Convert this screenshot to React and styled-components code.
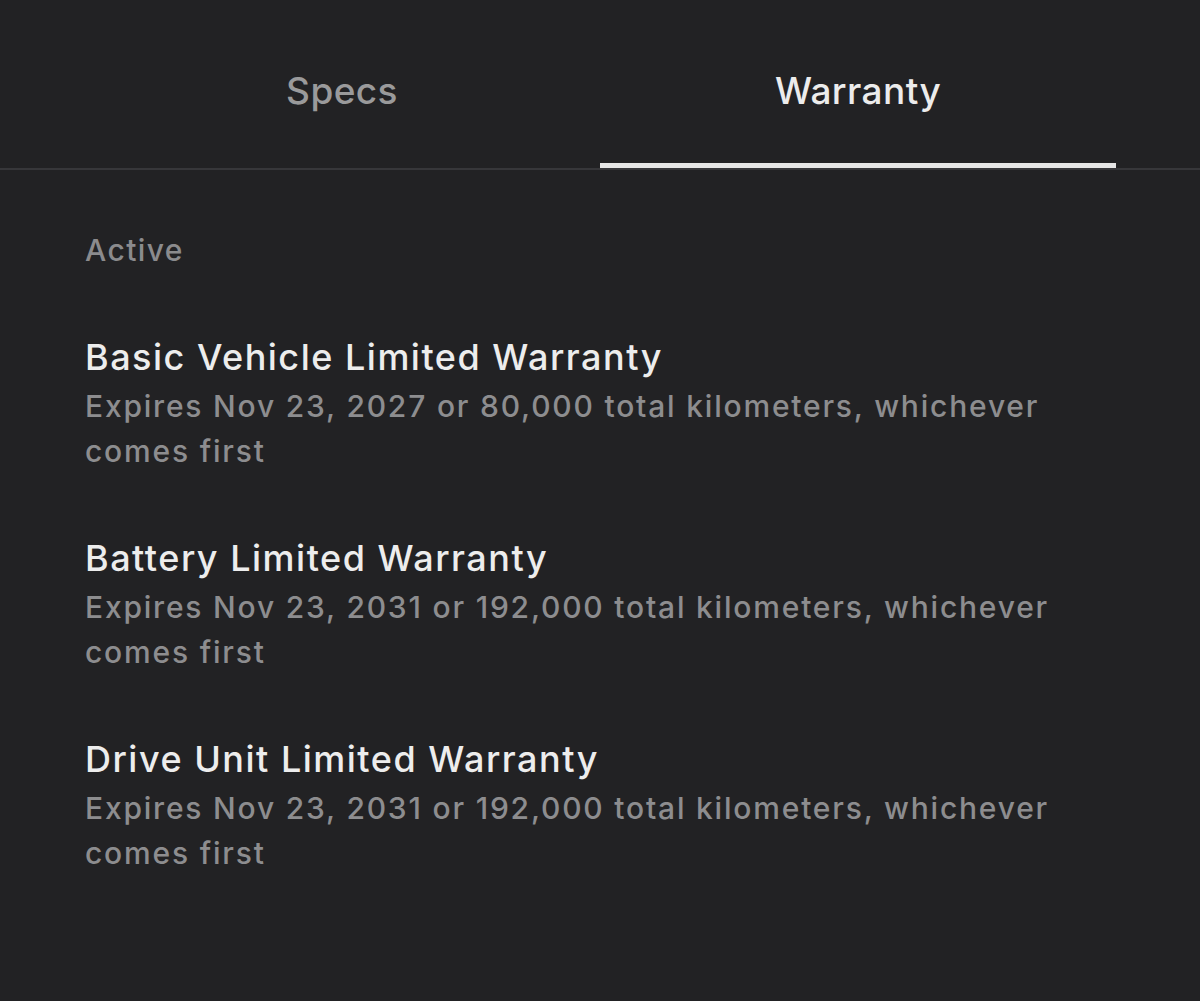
import styled, { createGlobalStyle } from 'styled-components'

const GlobalStyle = createGlobalStyle`
  html, body {
    margin: 0;
    padding: 0;
    background: #222224;
  }
  body {
    font-family: Inter, "Noto Sans", sans-serif;
    -webkit-font-smoothing: antialiased;
  }
`

const Page = styled.div`
  width: 1200px;
  height: 1001px;
  background: #222224;
  overflow: hidden;
`

const TabBar = styled.div`
  display: flex;
  padding: 0 84px;
  border-bottom: 2px solid #37373a;
`

const Tab = styled.div`
  flex: 1;
  height: 168px;
  display: flex;
  align-items: flex-start;
  justify-content: center;
  padding-top: 68px;
  box-sizing: border-box;
  font-size: 37px;
  font-weight: 500;
  letter-spacing: 0.4px;
  color: ${p => (p.$active ? '#ececec' : '#9a9a9b')};
  border-bottom: 5px solid ${p => (p.$active ? '#e6e6e6' : 'transparent')};
`

const Content = styled.div`
  padding: 62px 85px 0;
`

const Section = styled.div`
  font-size: 30px;
  font-weight: 500;
  letter-spacing: 1.4px;
  color: #8b8b8d;
  margin-bottom: 65px;
`

const Item = styled.div`
  margin-bottom: 60px;
`

const Title = styled.div`
  font-size: 36px;
  font-weight: 500;
  letter-spacing: 1.5px;
  color: #ededed;
  line-height: 48px;
  margin-bottom: 3px;
`

const Desc = styled.div`
  font-size: 30px;
  font-weight: 500;
  letter-spacing: 1.8px;
  color: #8d8d8f;
  line-height: 45px;
  max-width: 1000px;
`

const items = [
  { title: 'Basic Vehicle Limited Warranty', text: 'Expires Nov 23, 2027 or 80,000 total kilometers, whichever comes first' },
  { title: 'Battery Limited Warranty', text: 'Expires Nov 23, 2031 or 192,000 total kilometers, whichever comes first' },
  { title: 'Drive Unit Limited Warranty', text: 'Expires Nov 23, 2031 or 192,000 total kilometers, whichever comes first' },
]

export default function App() {
  return (
    <Page>
      <GlobalStyle />
      <TabBar>
        <Tab>Specs</Tab>
        <Tab $active>Warranty</Tab>
      </TabBar>
      <Content>
        <Section>Active</Section>
        {items.map(it => (
          <Item key={it.title}>
            <Title>{it.title}</Title>
            <Desc>{it.text}</Desc>
          </Item>
        ))}
      </Content>
    </Page>
  )
}
